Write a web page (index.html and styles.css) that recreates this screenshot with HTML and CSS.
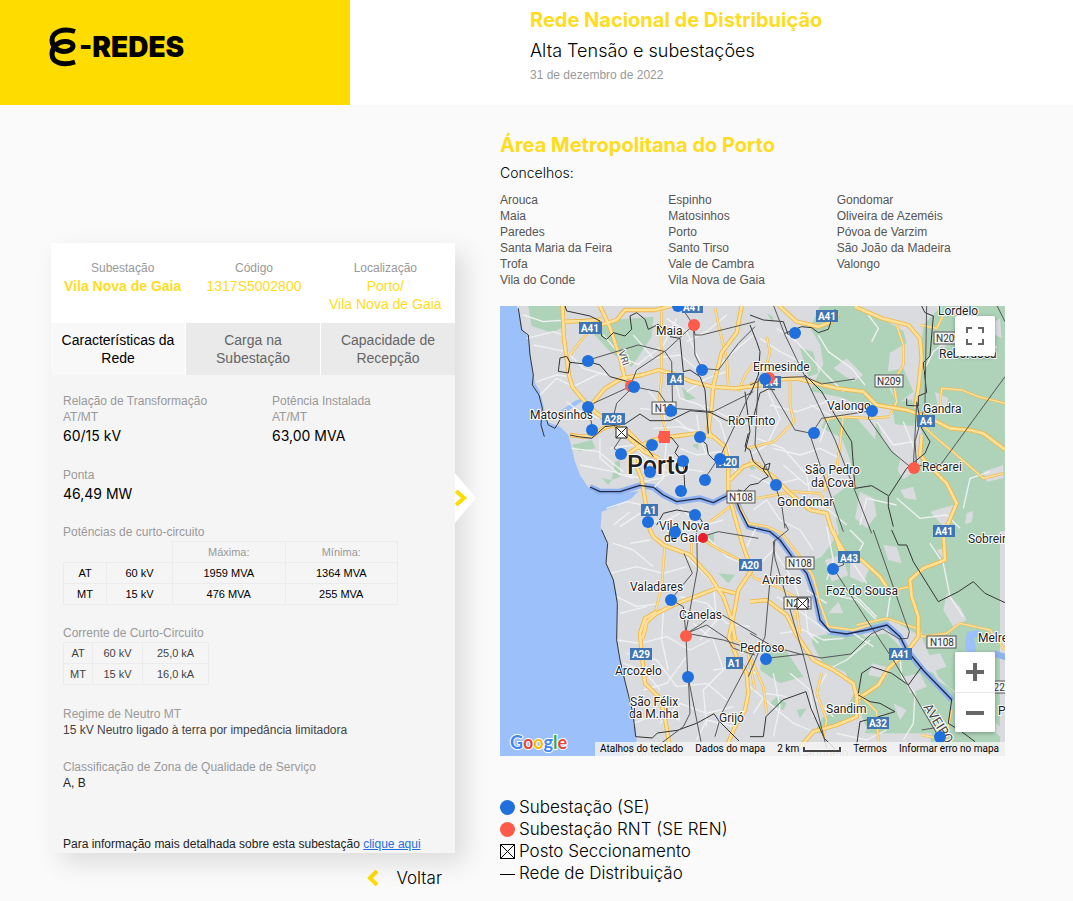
FILE: index.html
```html
<!DOCTYPE html>
<html lang="pt">
<head>
  <meta charset="UTF-8">
  <title>E-REDES - Rede Nacional de Distribuição</title>
  <link rel="stylesheet" href="styles.css">
</head>
<body>
  <header class="header">
    <div class="brand">
      <svg class="brand-mark" width="30" height="40" viewBox="0 0 30 40">
        <path d="M26 4.500C14 .5 3 5 3 13c0 7 6 11.500 12 11.500 5 0 9-2.500 9-5.500s-4-4.500-8-4.500C9 14.500 3 20 3 27c0 9 11 12 23 8"/>
      </svg>
      <span class="brand-name">-REDES</span>
    </div>
    <div class="header-text">
      <h1>Rede Nacional de Distribuição</h1>
      <p class="subtitle">Alta Tensão e subestações</p>
      <p class="date">31 de dezembro de 2022</p>
    </div>
  </header>

  <main class="content">
    <!-- LEFT SIDE (substation card) -->
    <section class="left">
      <div class="card">
        <div class="card-head">
          <div><span class="label">Subestação</span><strong>Vila Nova de Gaia</strong></div>
          <div><span class="label">Código</span><span class="val">1317S5002800</span></div>
          <div><span class="label">Localização</span><span class="val">Porto/<br>Vila Nova de Gaia</span></div>
        </div>
        <div class="tabs">
          <button class="tab active">Características da Rede</button>
          <button class="tab">Carga na Subestação</button>
          <button class="tab">Capacidade de Recepção</button>
        </div>
        <div class="card-body">
          <div class="row">
            <div><p class="label">Relação de Transformação<br>AT/MT</p><p class="big">60/15 kV</p></div>
            <div><p class="label">Potência Instalada<br>AT/MT</p><p class="big">63,00 MVA</p></div>
          </div>
          <div class="block">
            <p class="label">Ponta</p>
            <p class="big">46,49 MW</p>
          </div>
          <table class="power">
            <caption>Potências de curto-circuito</caption>
            <tr><td class="empty" colspan="2"></td><th>Máxima:</th><th>Mínima:</th></tr>
            <tr><td class="lv">AT</td><td class="kv">60 kV</td><td>1959 MVA</td><td>1364 MVA</td></tr>
            <tr><td class="lv">MT</td><td class="kv">15 kV</td><td>476 MVA</td><td>255 MVA</td></tr>
          </table>
          <table class="current">
            <caption>Corrente de Curto-Circuito</caption>
            <tr><td>AT</td><td>60 kV</td><td>25,0 kA</td></tr>
            <tr><td>MT</td><td>15 kV</td><td>16,0 kA</td></tr>
          </table>
          <div class="block">
            <p class="label">Regime de Neutro MT</p>
            <p class="neutral">15 kV Neutro ligado à terra por impedância limitadora</p>
          </div>
          <div class="block">
            <p class="label">Classificação de Zona de Qualidade de Serviço</p>
            <p>A, B</p>
          </div>
          <p class="more">Para informação mais detalhada sobre esta subestação <a href="#">clique aqui</a></p>
        </div>
        <button class="next" aria-label="Seguinte">
          <svg width="21" height="50" viewBox="0 0 21 50"><path class="tip" d="M0 0l21 25L0 50z"/><path class="chevron" d="M1 18l8 7-8 7"/></svg>
        </button>
      </div>
      <a class="back" href="#">
        <svg width="12" height="16" viewBox="0 0 12 16"><path class="chevron" d="M10 1L3 8l7 7"/></svg>
        Voltar
      </a>
    </section>

    <!-- RIGHT SIDE (area and map) -->
    <section class="right">
      <h2>Área Metropolitana do Porto</h2>
      <p class="towns-title">Concelhos:</p>
      <div class="towns">
        <ul><li>Arouca</li><li>Maia</li><li>Paredes</li><li>Santa Maria da Feira</li><li>Trofa</li><li>Vila do Conde</li></ul>
        <ul><li>Espinho</li><li>Matosinhos</li><li>Porto</li><li>Santo Tirso</li><li>Vale de Cambra</li><li>Vila Nova de Gaia</li></ul>
        <ul><li>Gondomar</li><li>Oliveira de Azeméis</li><li>Póvoa de Varzim</li><li>São João da Madeira</li><li>Valongo</li></ul>
      </div>

      <div class="map">
        <svg class="map-canvas" viewBox="0 0 505 450">
          <defs>
            <g id="motorways">
              <g transform="translate(0 -1) scale(.33333)">
                <path d="M187 0l5 100 15 110 10 35 50 60 30 25 75 55 60 55 45 20M300 3l30 65 30 90 15 65 15 20M265 310l50-60 50-30 60-10 50-15 40 10 60 25 60 15 70 5 80-10M725 3l-15 80-45 60-25 100-5 60-10 70 10 25"/>
                <path d="M210 390l40 5 30-5 30-20 30-10 40 15 50 50 20 15M385 445l40-25 35-15 70-12 60-8 50 10 35 30 10 50 0 60M400 460l25 60 15 95M300 60l50-15 25-30h90l60-15M195 50l60-2 50-5"/>
              </g>
              <g transform="translate(250 -1) scale(.33333)">
                <path d="M0 240l60-15 80-5 60 15 60 15 80 10 40 40 90 15 60 20 70 35 60 5 40 10 60 45 65 10M315 5l80 35 80 20 35 40 5 60-10 90-10 60M515 390l-5 60 30 35 50 50 30 60-25 60-20 30M0 465l70 50 50 50 60 50 50 10 15 50M85 0l55 50 65 15 40-15 20-25"/>
              </g>
              <g transform="translate(120 124) scale(.33333)">
                <path d="M325 160v30l25 90 20 70 25 70-40 60-15 80-15 70M330 150l40-40 30-10 20 5M80 240l10 60 10 20 30 25 80 30 60 65 40 60 25 70 10 60M345 490l-55-15-130 50-50 25-30 25-12 50M635 300l40 70"/>
              </g>
              <g transform="translate(0 224) scale(.33333)">
                <path d="M470 245l-35 20-15 45 5 60 10 90 45 45 15 60 15 90M688 325l22 55 30 50 5 60-10 50-30 50-25 60"/>
              </g>
              <g transform="translate(250 224) scale(.33333)">
                <path d="M250 0l20 60 65 30 55 50 20 30M580 0l5 90-65 25-40 35 5 50 20 60v60l-30 40-60 55-30 50-60 40M0 215l50-5 60 45 30 60 50 75 60 30 60 40 10 40v60l-60 25-70 20-50 60"/>
              </g>
            </g>
            <g id="local-roads">
              <g transform="translate(0 -1) scale(.33333)">
                <path d="M485 0l-2 110 3 100-10 90 25 90M645 10l15 70 20 80 5 85M765 170l-30 40-20 50M210 150l30-40 30-35"/>
              </g>
              <g transform="translate(250 -1) scale(.33333)">
                <path d="M50 95l10 45-15 60M120 230v70l12 50-60 60-80 20M440 60l20 60v60l-30 50 10 60-20 40M510 60l50 10 30-60M570 300l5-50 60 5 50 20 80 20M280 330l-10 90-10 70M500 345l60 55 60 50 80 70 60-15M220 345l50-10 90 5 60-5M225 560l5-60"/>
              </g>
              <g transform="translate(120 124) scale(.33333)">
                <path d="M350 215l35 65 55 10 45 20 55 70 40 60 20 80 25 70 75 10 50-15M250 330l50 30 60 30 45 55 65 25 55 30v70M410 205l110-20 80 5 25 45M135 340l-10 130-20 80M215 335v50M330 230l-60 45"/>
              </g>
              <g transform="translate(0 224) scale(.33333)">
                <path d="M690 320l50 30 25 130"/>
              </g>
              <g transform="translate(250 224) scale(.33333)">
                <path d="M320 285l90-20 90 30M140 240l10 70M0 380l40 90 10 80M215 430l-15 60 30 80-10 50M500 270l15 50 75-10 40-30 90 20 45 60M480 170l-70 15M320 485l60 60 5 90M515 615l70 15 20-90"/>
              </g>
            </g>
          </defs>

          <rect class="land" width="505" height="450"/>
          <g class="green">
            <g transform="translate(0 -1) scale(.33333)">
              <path d="M85 3h105l5 60-40 20-60-20zM270 75l60-30 130-10-5 60-60 90-60-40zM215 420l60-15 12 25-50 8zM345 470l15-5v50l-25 10zM575 420l20-5v20zM305 520l30 5-10 15z"/>
              <path d="M545 245l22 20 20 15-30 8z"/>
            </g>
            <g transform="translate(250 -1) scale(.33333)">
              <path d="M210 3h100l90 40 60 35 10 35-50 30-10 90 30 60 45-10 15 60-10 20-55-5-10-60-85 10-60-30-100-20 40-80-10-60-30-50zM520 60l55-57h190v675H330l-25-200-30-80-60-30 10-25 90-10 85 100 60 90 50-35 5-110-30-70 20-90z"/>
              <path d="M410 200l50-10 30 70-50 40zM330 250l50 20 20 30zM150 130l40 10 15 65-30 10zM50 25l20 10v20zM380 345l20 60 50 60-20 90-60-80z"/>
            </g>
            <g transform="translate(120 124) scale(.33333)">
              <path d="M260 315l22-5v25l-22 5zM385 105l25 8-15 8zM640 200l40-30 50 10v200h-60l-20-100zM560 400l90-40 80 30v230H640l-35-50-25-120z"/>
            </g>
            <g transform="translate(0 224) scale(.33333)">
              <path d="M655 130l50 5-20 25zM725 340l30 10v50z"/>
            </g>
            <g transform="translate(250 224) scale(.33333)">
              <path d="M275 0l-30 40-60 80 30 130 60 50 90-10 60-20 90 50 50 120 100 100 85 80V0zM190 320l60-10 100 10 60-10 60 60 80 60 75 110-10 70H190l30-50 70-25 25-50-30-60-70-30-30-60zM40 355l60-5 60 90-70 20-60-40zM60 520l40 20 10-20-30-20zM140 540l30-5-20 30zM560 450l100 60 90 80v60H540z"/>
            </g>
          </g>
          <g class="land">
            <g transform="translate(250 -1) scale(.33333)">
              <path d="M560 80l60 15-40 35-25-20zM700 70l50-30 5 60zM555 260l40 20-10 50-20-20zM650 625l20-8-5 35-20 5zM700 500l60-20v40l-50 10zM330 560l40 20 10 50-30 40-35-30zM540 620l70-20-25 70zM450 555l40-10 10 40-35-5zM290 160l50 50-30 20-60-40z"/>
            </g>
            <g transform="translate(250 224) scale(.33333)">
              <path d="M225 90l50-15 20 60-50 20zM235 250l30-35 15 35zM300 80l60 30-20 50-40-20zM590 190l40 40 20 40-40 20-30-50zM510 380l60-10 20 40-60 20zM460 440l50-10 20 40-50 20zM310 490l20 20-10 50-90 30-40 50 90-5 50 20 20-60zM240 465l50-5-20 30zM365 400l60 15-20 30-50-10zM400 45l40 5 15 50-40-10zM560 60l20-5 5 40zM430 520l40 20-20 30z"/>
            </g>
          </g>
          <g class="water">
            <g transform="translate(0 -1) scale(.33333)">
              <path d="M0 3h50l12 37 6 35 17 20 5 45 8 60 7 35 15 25 10 40 10 50 40 15 25 25 8 30 12 50 15 40 20 30 15 20 50 10 90-12-20 22-50 25-40 15-5 76H0zM170 325l60-40 30-5-60 40z"/>
            </g>
            <g transform="translate(0 224) scale(.33333)">
              <path d="M0-5h305l18 50-5 55 22 45 12 55-2 130 8 50 17 70 10 50 15 60 8 40 4 90H0z"/>
            </g>
            <path d="M467 326l12-2 3 5-8 3 3 18-8 5-4-14z"/>
          </g>
          <g class="river" transform="translate(120 124) scale(.33333)">
            <path id="douro" d="M-90 171l30 14h60l60-19 40 6 30 23 40 20 70-10 40 13 45-23 20 5 15 40 25 50 65 15 30 25 40 55 40 45 25 70 15 70 30 35 50 7 61-12 60-15 39 35 20 40 49 60 87 90"/>
            <path d="M1122 670l60 20"/>
          </g>

          <g class="streets">
            <g transform="translate(0 -1) scale(.33333)">
              <path d="M100 120l100 20 50 50 70 20M70 30l60 20 70-5M80 100l80-20 40 15M110 230l60-20 40 5M120 270l50-50 50 25 80-40M215 430l80 10 75 60M240 480l100 20 60 20M300 400v60l60 50M330 430l70-10 60 60 50 20M420 310l80 10 60 50 70 20M440 250l50 60 10 90-10 120-30 30M520 210l20 70 60 20 60 50 30 100M560 260l60-40 60-20M540 430l50 20 70-10 50 60M430 530l50-10 60-30 70 10M370 510l60 10M590 330l10 70 20 50M460 370l80-5 60 20M610 300l80 40 70 20M545 480l10 60M310 90l60 70 50 20M400 90l60 70 80-10 60 50M410 180l80-60 40-80M560 110l60-30 60-50M640 200l50-50 70-60M500 40l60 40 40 90M320 610l60-20 50 10M340 660l50-40M200 290l40 30 60 20"/>
            </g>
            <g transform="translate(250 -1) scale(.33333)">
              <path d="M50 250l40 90-40 80-50 30M80 70l60 40 80 90 60 60M30 100l60 40 80 40M60 300l80 20 90-30M70 430l80 20 60-20 60 30M100 480l70 60 80-50M150 590l80 20 60 50M180 300l60 30-30 80M20 400l80 30 70 80 10 60M0 510l70 30 80-20M205 90l30 50 70 50 40 50M355 30l30 40-20 40M520 200l30-60 60-50M600 10l80 40 60 80M440 580l70 60 80-10 40 40M640 610l20-90 60-20M330 660l20-80 90 20M380 350l50 70 60-10M460 350l40 100"/>
            </g>
            <g transform="translate(120 124) scale(.33333)">
              <path d="M0 290l60-40 60 30 60-30M30 340l60-10M180 230l60 60 70-20M380 350l30-60M420 400l40-40 60 90 30 90M400 240l40-30 40 60 60 30 40 60M620 290l20 100-20 60M560 480l60 40"/>
            </g>
            <g transform="translate(0 224) scale(.33333)">
              <path d="M340 40l60 20 60 50M330 130l80-20 80 20 70-20M350 200l60 30 70-10M360 250l80-20M350 330l70 10 80-20 70 40 60-30M380 370l90 20 60 80 90-10 60 50M430 480l70-20 60-80M480 580l60-60 80 30 80-20M490 240l-5 90 20 90M560 80l80 80 10 110-50 60M620 20l60 60 70 30M540 200l80 20 60 60 70 10M580 280l60 50 30 90-60 60 10 110M400 580l80-30 60 20M640 420l70-10 60 20M590 630l30-60 80 20M370 400l60 20 50 60"/>
            </g>
            <g transform="translate(250 224) scale(.33333)">
              <path d="M80 200l50 30 110 80M90 310l70-10 60 30 60-5M165 230l10 80 30 30M230 190l90 20 60 60M300 0l40 40-30 60 40 60M360 330l-70 60-60 30M270 170l60 40 50 50M310 310l60 40M420 200l-10 70M450 380l5 60 40 50-5 90-30 50M540 40l40 60 20 100 40 60M230 430l-40 70 60 60M0 470l70 60 60 50 50 20M10 550l40-60 60 10M70 430l20 100-20 90M120 430l60 50 10 80M260 610l90 20 60-30"/>
            </g>
          </g>

          <use class="local-case" href="#local-roads"/>
          <use class="local-core" href="#local-roads"/>
          <use class="road-case" href="#motorways"/>
          <use class="road-core" href="#motorways"/>

          <!-- municipal limits and coast -->
          <g class="limits">
            <g transform="translate(0 -1) scale(.33333)">
              <path d="M55 10l10 65 20 15 5 60 10 60-3 30 20 30 10 40-4 50 10 35M135 330l10 30 20 10 15-25M195 3l5 15 70 15 30 15 5 45 15 10 20-20 35 10 20-20-5-40 20-10 25 20 10 30 30-15 20 20 5-10M210 390l25 5 40 5 40-35 60-8 45-30 30 20 60 0 60-30 60 5 50 25 80-8 20-75 25-12 20 2M210 172l-10-18-20 5-5 40 30 5 5-32 45 5 8-10M265 170l35 10 30 35 55 15M510 95l30 5 10 100 20-5 30 20 15 40 10 130"/>
              <path d="M490 393l25 5 20 25-10 20 25 30 5 85M590 393l30 25 5 30 20 20M735 260l15 120-15 60M470 660l20-35 40-10 60 10 20 30M385 390l60 45 15 20"/>
            </g>
            <g transform="translate(250 -1) scale(.33333)">
              <path d="M0 60l20 50 10 30-5 70-25 60M0 30l40 15 60 5 15 40M515 3l10 20 25 10-10 120-20 20 10 90-25 10v30l-35-2v-20M500 290l15 80 25 40-15 35-55 45-55 85 0 30 15 60M165 210l50 50 40 70 50 80 10 140 50-8 50 30"/>
              <path d="M105 85l50-20 30 3 20 15 30-10 20-60"/>
            </g>
            <g transform="translate(120 124) scale(.33333)">
              <path d="M385 10l-10 40 15 10 10 35 25 20 20 5 5-20-15 5-5 15 15 20-20 10-10 10-25 5-20 20-15-5-20 40"/>
            </g>
            <g transform="translate(0 224) scale(.33333)">
              <path d="M305 0l18 40-5 60 22 50 12 70-2 110 10 60 14 60 10 40 15 60 8 70 50 4 15-15 60-8 60-22 50-28 15 22 60 60"/>
            </g>
            <g transform="translate(250 224) scale(.33333)">
              <path d="M425 0l20 45h25l20 50 75 120 60-30 45-30 35 35 60 28M0 620h40l8-60 50-50 70-25 15 50 40 90 40 40M325 490l10-60 30-20 60 20 50 35 40-55M325 495l35 20 30 5 45 25-65 20-40 10-10 70M605 510l-10 70 40 25 40 30"/>
            </g>
          </g>

          <!-- high voltage network -->
          <g class="network">
            <g transform="translate(0 -1) scale(.33333)">
              <path d="M265 165l150-45 80 20 20 30 3 145M580 60l5 30 20 0 160-40M580 60l-80 75-90 60-20 50-110 50M400 245l-50 50-15 60 25 25M400 245l75 15 35 50M580 60l5 90 20 40 50 5 60-80 50-50M264 305l15 70M540 0l40 60M362 380v20l-20 30 20 15M755 255l-90 190-50 75M520 310l120 10 120-60"/>
            </g>
            <g transform="translate(250 -1) scale(.33333)">
              <path d="M45 220l120-5 50 22 100-15M70 0l35 90 60 125 90 190 110 280M45 220l90 155 50 10 30-45 145-22M180 390l30 90 70 200M360 320l-5 20 70 100 55 45 95-10 190-260M490 485l10-190M0 240l25-10M25 220l-10 200 60 120 20 60 10 70M740 0l25 50"/>
              <path d="M530 0l-5 300-30 110 5 75"/>
            </g>
            <g transform="translate(0 224) scale(.33333)">
              <path d="M512 210l65-80-25-60M515 210l35 20 8 85 5 120 40 200M590-20l2 140-35 190M560 310l40-25 50-40 120 70M560 310l60-25 60 40 20 30 65 20M560 310l110 20 95 30-100 190-20 70M565 440l5 110-20 40-80 60M605 20l50-15 120 20"/>
            </g>
            <g transform="translate(250 224) scale(.33333)">
              <path d="M105-20l10 20-45 35 5 50 85 290 70 280M75 30l-15 120-15 170-50 120M48 385l115-13 50 12 90-12 60-60 35-15 50 30 25-2 5-20-15-40L370 0M250 115l120 185 60 90 130 220M0 310l70 40 90 25M250 115l30-10V70M515 600l60-10"/>
            </g>
          </g>
          <use class="river-line" href="#douro" transform="translate(120 124) scale(.33333)"/>

          <g class="city">
            <text class="faint" x="121" y="453">Espinho</text>
            <text class="faint" x="298" y="451">Canguejo</text>
            <text x="156" y="29">Maia</text>
            <text x="438" y="9">Lordelo</text>
            <text x="253" y="65">Ermesinde</text>
            <text x="439" y="52">Rebordosa</text>
            <text x="30" y="113">Matosinhos</text>
            <text x="228" y="119">Rio Tinto</text>
            <text x="327" y="104">Valongo</text>
            <text x="423" y="107">Gandra</text>
            <text x="422" y="165">Recarei</text>
            <text x="305" y="168">São Pedro</text>
            <text x="311" y="181">da Cova</text>
            <text x="277" y="200">Gondomar</text>
            <text x="159" y="224">Vila Nova</text>
            <text x="164" y="236">de Gaia</text>
            <text x="468" y="237">Sobreira</text>
            <text x="130" y="285">Valadares</text>
            <text x="262" y="278">Avintes</text>
            <text x="326" y="289">Foz do Sousa</text>
            <text x="179" y="313">Canelas</text>
            <text x="240" y="346">Pedroso</text>
            <text x="478" y="336">Melres</text>
            <text x="115" y="369">Arcozelo</text>
            <text x="130" y="400">São Félix</text>
            <text x="129" y="412">da M.nha</text>
            <text x="219" y="416">Grijó</text>
            <text x="326" y="407">Sandim</text>
            <text x="498" y="409">P</text>
            <text class="wide" x="423" y="401" transform="rotate(58 423 401)">AVEIRO</text>
            <text class="small" x="118" y="46" transform="rotate(70 118 46)">VRI</text>
            <text class="porto" x="127" y="168">Porto</text>
          </g>

          <g class="motorway-tag">
            <rect x="79" y="16" width="23" height="12"/><text x="90" y="26">A41</text>
            <rect x="182" y="-5" width="21" height="12"/><text x="192" y="5">A41</text>
            <rect x="316" y="4" width="22" height="12"/><text x="327" y="14">A41</text>
            <rect x="167" y="67" width="17" height="12"/><text x="176" y="77">A4</text>
            <rect x="263" y="70" width="18" height="12"/><text x="272" y="80">A4</text>
            <rect x="102" y="107" width="23" height="12"/><text x="113" y="117">A28</text>
            <rect x="417" y="109" width="18" height="12"/><text x="426" y="119">A4</text>
            <rect x="216" y="150" width="23" height="12"/><text x="228" y="160">A20</text>
            <rect x="141" y="198" width="17" height="12"/><text x="150" y="208">A1</text>
            <rect x="433" y="219" width="22" height="12"/><text x="444" y="229">A41</text>
            <rect x="239" y="253" width="23" height="12"/><text x="250" y="263">A20</text>
            <rect x="338" y="245" width="22" height="12"/><text x="349" y="256">A43</text>
            <rect x="130" y="342" width="22" height="12"/><text x="141" y="352">A29</text>
            <rect x="389" y="342" width="23" height="12"/><text x="400" y="352">A41</text>
            <rect x="226" y="351" width="17" height="12"/><text x="234" y="361">A1</text>
            <rect x="367" y="411" width="22" height="12"/><text x="378" y="421">A32</text>
          </g>
          <g class="national-tag">
            <rect x="152" y="96" width="24" height="12"/><text x="164" y="106">N12</text>
            <rect x="375" y="69" width="28" height="12"/><text x="389" y="79">N209</text>
            <rect x="434" y="26" width="28" height="12"/><text x="448" y="36">N209</text>
            <rect x="227" y="185" width="28" height="12"/><text x="241" y="195">N108</text>
            <rect x="286" y="251" width="28" height="12"/><text x="300" y="261">N108</text>
            <rect x="284" y="291" width="27" height="12"/><text x="298" y="301">N222</text>
            <rect x="427" y="330" width="29" height="12"/><text x="442" y="340">N108</text>
            <rect x="492" y="375" width="28" height="12"/><text x="502" y="385">222</text>
          </g>

          <g class="se-ren">
            <circle cx="194" cy="19" r="6"/><circle cx="131" cy="80" r="6"/><circle cx="269" cy="72" r="6"/>
            <circle cx="414" cy="162" r="6"/><circle cx="186" cy="330" r="6"/>
            <rect x="159" y="125" width="11" height="12"/><circle cx="164" cy="131" r="6"/>
          </g>
          <g class="se">
            <circle cx="178" cy="0" r="6"/><circle cx="295" cy="27" r="6"/><circle cx="88" cy="55" r="6"/>
            <circle cx="202" cy="64" r="6"/><circle cx="134" cy="81" r="6"/><circle cx="265" cy="73" r="6"/>
            <circle cx="88" cy="101" r="6"/><circle cx="171" cy="105" r="6"/><circle cx="92" cy="124" r="6"/>
            <circle cx="372" cy="105" r="6"/><circle cx="200" cy="131" r="6"/><circle cx="314" cy="127" r="6"/>
            <circle cx="152" cy="139" r="6"/><circle cx="121" cy="148" r="6"/><circle cx="183" cy="155" r="6"/>
            <circle cx="220" cy="153" r="6"/><circle cx="150" cy="166" r="6"/><circle cx="205" cy="174" r="6"/>
            <circle cx="181" cy="185" r="6"/><circle cx="276" cy="179" r="6"/><circle cx="195" cy="209" r="6"/>
            <circle cx="148" cy="216" r="6"/><circle cx="175" cy="226" r="6"/><circle cx="333" cy="263" r="6"/>
            <circle cx="171" cy="294" r="6"/><circle cx="266" cy="353" r="6"/><circle cx="188" cy="371" r="6"/>
            <circle cx="440" cy="431" r="6"/>
          </g>
          <circle class="selected" cx="203" cy="232" r="5"/>
          <g class="post">
            <path d="M116 121h11v11h-11zl11 11m0-11l-11 11M297 292h11v11h-11zl11 11m0-11l-11 11"/>
          </g>
        </svg>

        <button class="map-btn full" aria-label="Ecrã inteiro">
          <svg width="18" height="18" viewBox="0 0 18 18"><path d="M1 6V1h5M12 1h5v5M17 12v5h-5M6 17H1v-5"/></svg>
        </button>
        <div class="zoom">
          <button class="map-btn" aria-label="Aumentar"><svg width="18" height="18" viewBox="0 0 18 18"><path d="M9 0v18M0 9h18"/></svg></button>
          <button class="map-btn" aria-label="Diminuir"><svg width="18" height="18" viewBox="0 0 18 18"><path d="M0 9h18"/></svg></button>
        </div>
        <a class="google" href="#"><span class="b">G</span><span class="r">o</span><span class="y">o</span><span class="b">g</span><span class="g">l</span><span class="r">e</span></a>
        <div class="map-bar">
          <button>Atalhos do teclado</button>
          <button>Dados do mapa</button>
          <button>2 km<i class="scale"></i></button>
          <a href="#">Termos</a>
          <a href="#">Informar erro no mapa</a>
        </div>
      </div>

      <ul class="legend">
        <li><svg width="15" height="15" viewBox="0 0 30 30"><circle class="blue" cx="15" cy="15" r="15"/></svg>Subestação (SE)</li>
        <li><svg width="15" height="15" viewBox="0 0 30 30"><circle class="red" cx="15" cy="15" r="15"/></svg>Subestação RNT (SE REN)</li>
        <li><svg width="15" height="15" viewBox="0 0 30 30"><path d="M1 1h28v28H1zl28 28m0-28L1 29"/></svg>Posto Seccionamento</li>
        <li><svg width="15" height="15" viewBox="0 0 30 30"><path d="M0 17h30"/></svg>Rede de Distribuição</li>
      </ul>
    </section>
  </main>
</body>
</html>
```
FILE: styles.css
```css
* {
  box-sizing: border-box;
}

body {
  margin: 0;
  font-family: "Liberation Sans", Arial, sans-serif;
  font-size: 12px;
  line-height: 16px;
  color: #222;
  background-color: #fafafa;
}

h1, h2, p, ul {
  margin: 0;
  padding: 0;
}

ul {
  list-style: none;
}

button {
  font-family: inherit;
  border: none;
  padding: 0;
  cursor: pointer;
}

/* Header */
.header {
  display: flex;
  height: 105px;
  background-color: #fff;
}

.brand {
  display: flex;
  align-items: center;
  width: 350px;
  padding: 0 0 12px 49px;
  background-color: #ffdc00;
  color: #000;
}

.brand-mark path {
  fill: none;
  stroke: #000;
  stroke-width: 5;
}

.brand-name {
  font-family: Inter, sans-serif;
  font-size: 28px;
  font-weight: 900;
  line-height: 32px;
}

.header-text {
  padding: 7px 0 0 180px;
}

h1, h2 {
  font-family: Inter, sans-serif;
  font-size: 20px;
  line-height: 26px;
  font-weight: 700;
  color: #ffdc1e;
}

.subtitle {
  font-family: Inter, sans-serif;
  font-size: 18px;
  font-weight: 300;
  line-height: 24px;
  margin: 6px 0 4px;
  color: #000;
}

.date {
  color: #999;
}

/* Overall layout */
.content {
  display: grid;
  grid-template-columns: 404px 1fr;
  gap: 45px;
  padding: 27px 68px 18px 51px;
}

.left {
  padding-top: 111px;
}

.label,
caption {
  color: #999;
}

/* Substation card */
.card {
  position: relative;
  background-color: #f5f5f6;
  box-shadow: 10px 10px 24px rgba(0, 0, 0, 0.12);
}

.card-head {
  display: grid;
  grid-template-columns: repeat(3, 1fr);
  min-height: 80px;
  padding: 17px 4px 0 6px;
  background-color: #fff;
  text-align: center;
  font-size: 14px;
  line-height: 18px;
  color: #ffdc1e;
}

.card-head .label {
  display: block;
  font-size: 12px;
  line-height: 17px;
}

.tabs {
  display: grid;
  grid-template-columns: repeat(3, 1fr);
  gap: 1px;
  background-color: #fff;
}

.tab {
  padding: 8px;
  background-color: #eaeaea;
  font-size: 14px;
  line-height: 18px;
  color: #666;
}

.tab.active {
  background-color: #f8f8f9;
  color: #000;
}

.card-body {
  padding: 18px 12px 1px;
}

.row {
  display: grid;
  grid-template-columns: 209px 1fr;
}

.big {
  font-family: Inter, sans-serif;
  font-size: 14px;
  line-height: 21px;
  color: #000;
}

.block {
  margin-top: 21px;
}

table {
  margin-top: 20px;
  border-collapse: collapse;
  font-size: 11px;
  line-height: 20px;
  text-align: center;
}

caption {
  font-size: 12px;
  line-height: 17px;
  text-align: left;
  white-space: nowrap;
}

th, td {
  padding: 0;
  border: 1px solid #ececee;
  font-weight: normal;
}

th {
  color: #999;
}

.power {
  width: 335px;
  color: #000;
}

.power .empty {
  border-top-color: transparent;
  border-left-color: transparent;
}

.lv { width: 43px; }
.kv { width: 66px; }

.current {
  width: 146px;
  color: #444;
}

.neutral {
  color: #444;
}

.more {
  margin-top: 45px;
}

.more a {
  color: #1f6fdc;
}

.next {
  position: absolute;
  left: 100%;
  top: 230px;
  background: none;
  line-height: 0;
}

.tip {
  fill: #fff;
}

.chevron {
  fill: none;
  stroke: #ffdc00;
  stroke-width: 4;
}

.back {
  display: flex;
  align-items: center;
  justify-content: flex-end;
  gap: 17px;
  padding: 14px 13px 0 0;
  font-family: Inter, sans-serif;
  font-size: 17px;
  font-weight: 300;
  line-height: 22px;
  color: #000;
  text-decoration: none;
}

/* Area */
.towns-title {
  font-family: Inter, sans-serif;
  font-size: 14px;
  font-weight: 300;
  line-height: 20px;
  margin: 5px 0 9px;
  color: #000;
}

.towns {
  display: grid;
  grid-template-columns: repeat(3, 1fr);
  margin-bottom: 18px;
  color: #555;
}

/* Map */
.map {
  position: relative;
  overflow: hidden;
}

.map-canvas {
  display: block;
  width: 100%;
}

.map-canvas path {
  stroke-linejoin: round;
}

.land { fill: #d9dbde; }
.green { fill: #aed3b8; }
.water { fill: #9cc0f9; }

.streets, .limits, .network,
.local-case, .local-core, .road-case, .road-core {
  fill: none;
}

/* the river course is drawn twice, so its colours come from the parent */
.river { fill: none; stroke: #8fb1ee; stroke-width: 18; }
.river-line { fill: none; stroke: #1d2a4d; stroke-width: 4; }
.streets { stroke: #f0f1f2; stroke-width: 4; }
.local-case { stroke: #f1bd55; stroke-width: 8; }
.local-core { stroke: #fbe3a2; stroke-width: 4; }
.road-case { stroke: #efb545; stroke-width: 13; }
.road-core { stroke: #fde198; stroke-width: 8; }
.limits { stroke: #333; stroke-width: 3; }
.network { stroke: #555; stroke-width: 3; }

.city {
  font-family: Roboto, sans-serif;
  font-size: 12px;
  fill: #202124;
  stroke: #fff;
  stroke-width: 2px;
  paint-order: stroke;
}

.city .small { font-size: 10px; fill: #555; }
.city .faint { fill: #999; }
.city .wide { font-size: 13px; fill: #444; }
.city .porto { font-size: 25px; font-weight: 500; }

.motorway-tag rect { fill: #4075b5; }

.motorway-tag text,
.national-tag text {
  font-family: Roboto, sans-serif;
  font-size: 10px;
  text-anchor: middle;
}

.motorway-tag text { fill: #fff; font-weight: 700; }
.national-tag rect { fill: #f4f4f4; stroke: #555; }
.national-tag text { fill: #333; }

.se, .blue { fill: #1f6fdc; }
.se-ren, .red { fill: #ff5a4a; }
.selected { fill: #e81f2c; }
.post { fill: #fff; stroke: #222; }

.map-btn {
  display: flex;
  align-items: center;
  justify-content: center;
  width: 40px;
  height: 40px;
  background-color: #fff;
  border-radius: 2px;
}

.map-btn path {
  fill: none;
  stroke: #666;
  stroke-width: 4;
}

.full {
  position: absolute;
  top: 10px;
  right: 10px;
  box-shadow: 0 1px 4px rgba(0, 0, 0, 0.3);
}

.full path {
  stroke-width: 2;
}

.zoom {
  position: absolute;
  right: 10px;
  bottom: 24px;
  background-color: #fff;
  border-radius: 2px;
  box-shadow: 0 1px 4px rgba(0, 0, 0, 0.3);
}

.zoom .map-btn + .map-btn {
  border-top: 1px solid #e6e6e6;
}

.google {
  position: absolute;
  left: 10px;
  bottom: 3px;
  font-family: Lato, sans-serif;
  font-size: 18px;
  font-weight: 700;
  line-height: 22px;
  text-decoration: none;
  -webkit-text-stroke: 2px #fff;
  paint-order: stroke fill;
}

.b { color: #4285f4; }
.r { color: #ea4335; }
.y { color: #fbbc05; }
.g { color: #34a853; }

.map-bar {
  position: absolute;
  right: 0;
  bottom: 0;
  display: flex;
  justify-content: space-between;
  width: 410px;
  height: 14px;
  padding: 0 6px 0 5px;
  background-color: rgba(245, 245, 245, 0.8);
}

.map-bar button,
.map-bar a {
  font-family: Roboto, sans-serif;
  font-size: 10px;
  line-height: 14px;
  color: #000;
  background: none;
  text-decoration: none;
}

.scale {
  display: inline-block;
  width: 38px;
  height: 5px;
  margin-left: 4px;
  border: 2px solid #444;
  border-top: none;
}

/* Legend */
.legend {
  margin-top: 40px;
  font-family: Inter, sans-serif;
  font-size: 17px;
  font-weight: 300;
  line-height: 22px;
  color: #000;
}

.legend li {
  display: flex;
  align-items: center;
  gap: 4px;
}

.legend path {
  fill: none;
  stroke: #000;
  stroke-width: 2;
}
```
